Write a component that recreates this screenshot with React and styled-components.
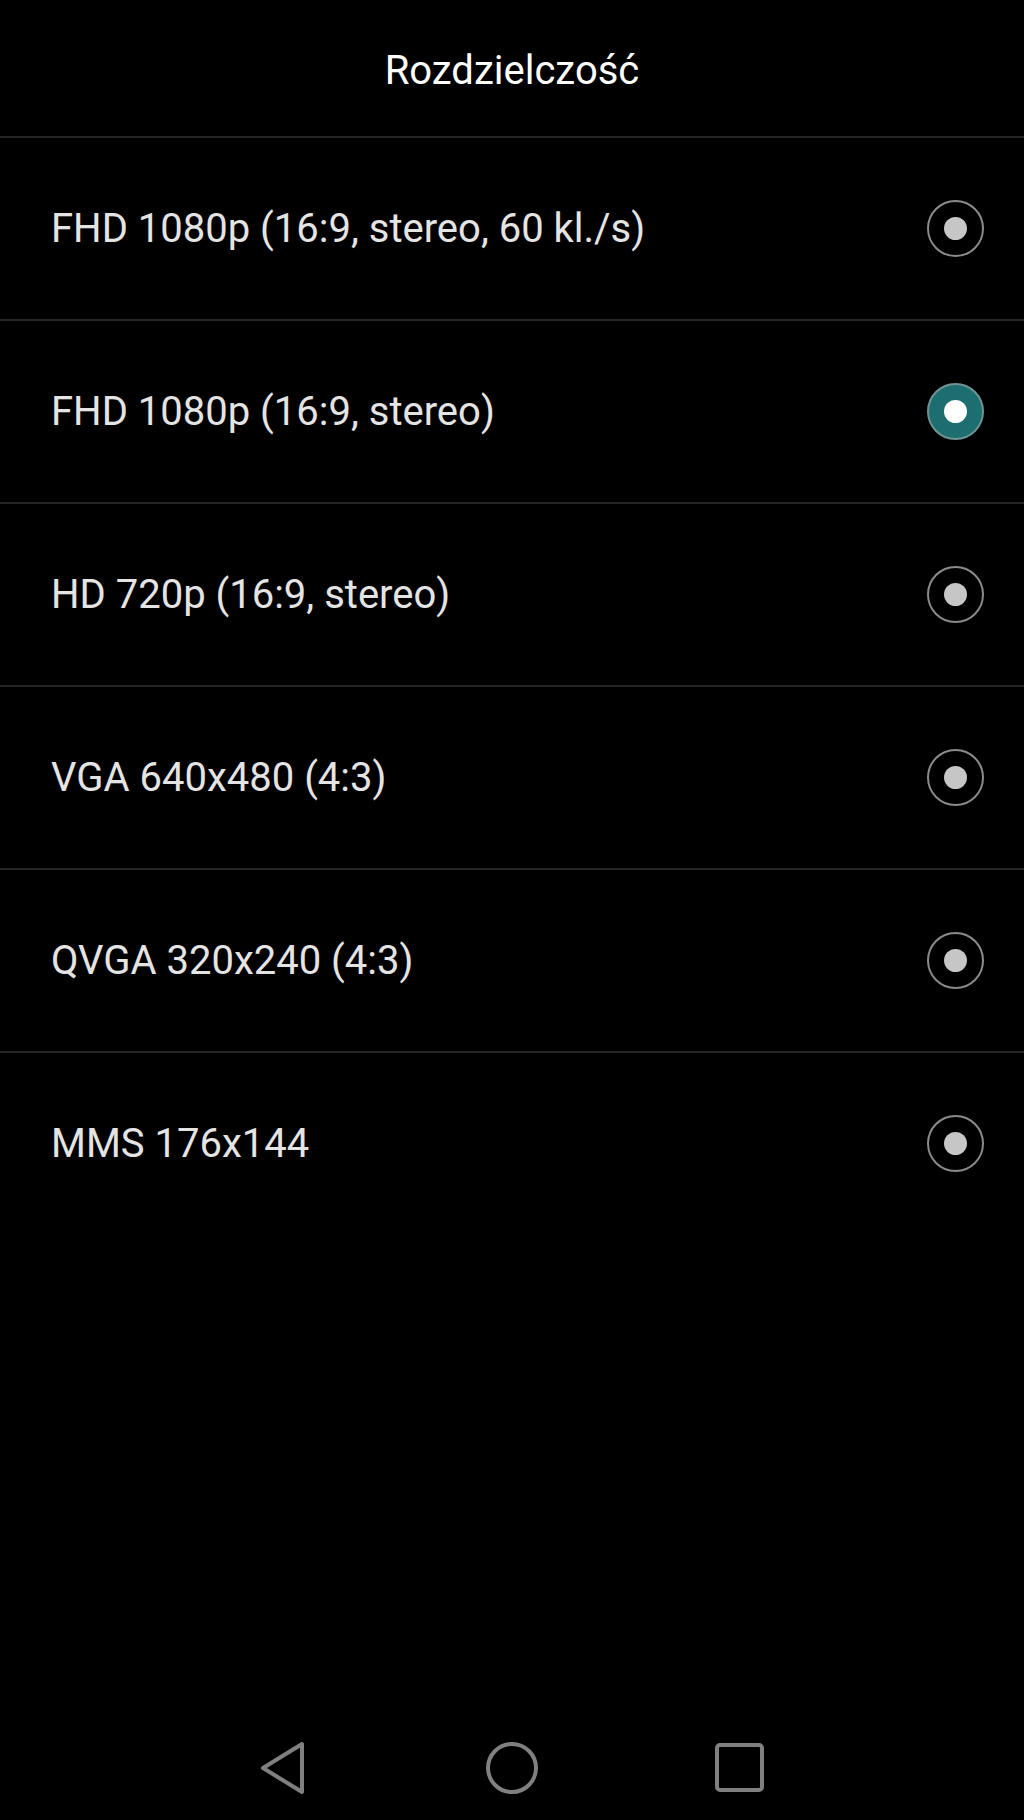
import React from 'react'
import styled, { createGlobalStyle } from 'styled-components'

const GlobalStyle = createGlobalStyle`
html, body {
  margin: 0;
  padding: 0;
  background: #000;
}
body {
  font-family: Roboto, "Noto Sans", sans-serif;
}
`

const Screen = styled.div`
width: 1024px;
min-height: 1820px;
background: #000;
display: flex;
flex-direction: column;
`

const Header = styled.div`
height: 136px;
display: flex;
align-items: center;
justify-content: center;
border-bottom: 2px solid #262626;
`

const Title = styled.h1`
margin: 4px 0 0 0;
font-size: 40px;
font-weight: 400;
color: #fff;
`

const List = styled.div`
display: flex;
flex-direction: column;
`

const Row = styled.div`
height: 181px;
display: flex;
align-items: center;
justify-content: space-between;
padding: 0 40px 0 51px;
border-bottom: 2px solid #262626;
&:last-child {
  border-bottom: none;
}
`

const Label = styled.span`
font-size: 40px;
color: #e4e4e4;
`

const Radio = styled.div`
width: 57px;
height: 57px;
border-radius: 50%;
box-sizing: border-box;
display: flex;
align-items: center;
justify-content: center;
border: 2px solid ${p => (p.checked ? '#6f9393' : '#8a8a8a')};
background: ${p => (p.checked ? '#1c6e70' : 'transparent')};
`

const Dot = styled.div`
width: 23px;
height: 23px;
border-radius: 50%;
background: ${p => (p.checked ? '#fff' : '#c6c6c6')};
`

const Spacer = styled.div`
flex: 1;
`

const NavBar = styled.div`
height: 104px;
display: flex;
align-items: center;
justify-content: center;
gap: 170px;
`

const NavIcon = styled.svg`
width: 58px;
height: 58px;
display: block;
`

const options = [
  'FHD 1080p (16:9, stereo, 60 kl./s)',
  'FHD 1080p (16:9, stereo)',
  'HD 720p (16:9, stereo)',
  'VGA 640x480 (4:3)',
  'QVGA 320x240 (4:3)',
  'MMS 176x144',
]

const App = () => {
  const selected = 1
  return (
    <>
      <GlobalStyle />
      <Screen>
        <Header>
          <Title>Rozdzielczość</Title>
        </Header>
        <List>
          {options.map((o, i) => (
            <Row key={o}>
              <Label>{o}</Label>
              <Radio checked={i === selected}>
                <Dot checked={i === selected} />
              </Radio>
            </Row>
          ))}
        </List>
        <Spacer />
        <NavBar>
          <NavIcon viewBox="0 0 58 58">
            <path d="M47 5 L47 53 L8 29 Z" fill="none" stroke="#808080" strokeWidth="4" strokeLinejoin="round" />
          </NavIcon>
          <NavIcon viewBox="0 0 58 58">
            <circle cx="29" cy="29" r="24" fill="none" stroke="#808080" strokeWidth="4" />
          </NavIcon>
          <NavIcon viewBox="0 0 58 58">
            <rect x="6" y="6" width="45" height="45" rx="3" fill="none" stroke="#808080" strokeWidth="4" />
          </NavIcon>
        </NavBar>
      </Screen>
    </>
  )
}

export default App
